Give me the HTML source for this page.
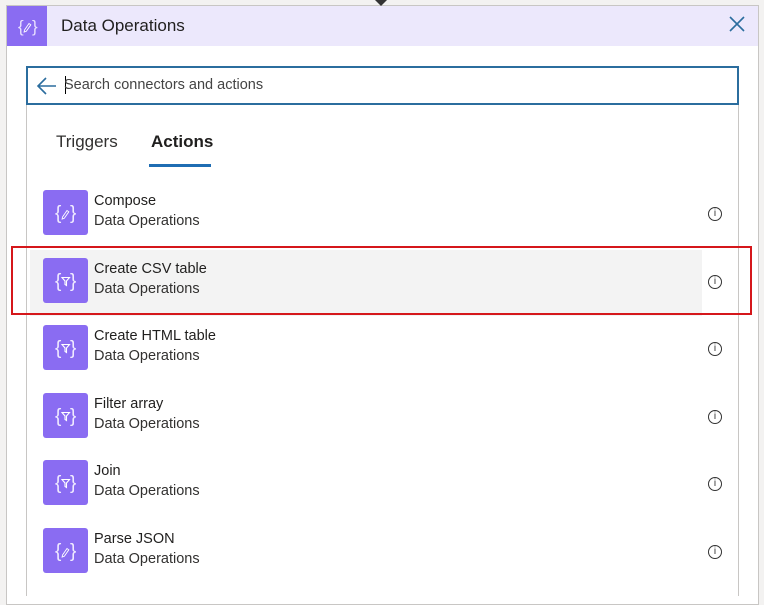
<!DOCTYPE html>
<html><head><style>
*{margin:0;padding:0;box-sizing:border-box}
body{width:764px;height:585px;overflow:hidden;background:#f3f2f1;font-family:"Liberation Sans",sans-serif;position:relative}
.card{position:absolute;left:6px;top:5px;width:753px;height:600px;background:#fff;border:1px solid #c8c6c4}
.hdr{position:absolute;left:7px;top:6px;width:751px;height:40px;background:#ece8fc}
.hico{position:absolute;left:7px;top:6px;width:40px;height:40px;background:#8a6cf2}
.ttl{position:absolute;left:61px;top:16px;font-size:17px;color:#201f1e}
.x{position:absolute;left:728px;top:15px}
.vl{position:absolute;top:66px;width:1px;height:530px;background:#c8c6c4}
.search{position:absolute;left:26px;top:66px;width:713px;height:39px;border:2px solid #2b6d9e;background:#fff}
.stext{position:absolute;left:64px;top:77px;font-size:14.5px;color:#444}
.tab{position:absolute;top:132px;font-size:17px;color:#323130}
.ul{position:absolute;left:149px;top:164px;width:62px;height:3px;background:#1f6db3}
.ico{position:absolute;left:43px;width:45px;height:45px;background:#8a6cf2;border-radius:3px}
.ico svg,.hico svg{position:absolute;left:0;top:0}
.t1{position:absolute;left:94px;font-size:14.5px;color:#201f1e}
.t2{position:absolute;left:94px;font-size:14.5px;color:#323130}
.inf{position:absolute;left:708px;width:14px;height:14px;border:1px solid #333;border-radius:50%;font-size:10px;text-align:center;line-height:12px;color:#333}
.hl{position:absolute;left:30px;top:250px;width:672px;height:66px;background:#f3f3f3}
.red{position:absolute;left:11px;top:246px;width:741px;height:69px;border:2px solid #d5171b}
svg text{font-family:"Liberation Sans",sans-serif}
</style></head><body>
<div class="card"></div>
<div class="hdr"></div>
<div class="hico"><svg width="40" height="40"><text x="11" y="26" fill="#e8e0ff" font-size="17">{</text><text x="25" y="26" fill="#e8e0ff" font-size="17">}</text><path d="M17.5 24l4.5-6.5 1.8 1.3-4.5 6.5-2.2 0.8z" fill="none" stroke="#fff" stroke-width="0.9"/></svg></div>
<div class="ttl">Data Operations</div>
<svg class="x" width="18" height="18"><path d="M2 2L16 16M16 2L2 16" stroke="#2b6d9e" stroke-width="1.6"/></svg>
<svg style="position:absolute;left:375px;top:0" width="12" height="6"><path d="M0 0h12L6 6z" fill="#333"/></svg>
<div class="vl" style="left:26px"></div>
<div class="vl" style="left:738px"></div>
<div class="search"></div>
<svg style="position:absolute;left:36px;top:76px" width="22" height="20"><path d="M20 10H3M10 2L2 10l8 8" fill="none" stroke="#2b6d9e" stroke-width="1.6"/></svg>
<div style="position:absolute;left:65px;top:76px;width:1px;height:18px;background:#000"></div>
<div class="stext">Search connectors and actions</div>
<div class="tab" style="left:56px">Triggers</div>
<div class="tab" style="left:151px;font-weight:bold;color:#201f1e">Actions</div>
<div class="ul"></div>
<div class="hl"></div>

<div class="ico" style="top:190px"><svg width="45" height="45"><text x="12" y="29" fill="#f0ebff" font-size="19">{</text><text x="27" y="29" fill="#f0ebff" font-size="19">}</text><path d="M19.5 27l4.5-6.5 1.8 1.3-4.5 6.5-2.2 0.8z" fill="none" stroke="#fff" stroke-width="0.9"/></svg></div>
<div class="t1" style="top:193px">Compose</div><div class="t2" style="top:213px">Data Operations</div><div class="inf" style="top:207px">i</div>

<div class="ico" style="top:258px"><svg width="45" height="45"><text x="12" y="29" fill="#f0ebff" font-size="19">{</text><text x="27" y="29" fill="#f0ebff" font-size="19">}</text><path d="M19 19.5h7.5l-3 3.5v4.5l-1.5-1v-3.5z" fill="none" stroke="#fff" stroke-width="1.1"/></svg></div>
<div class="t1" style="top:261px">Create CSV table</div><div class="t2" style="top:281px">Data Operations</div><div class="inf" style="top:275px">i</div>

<div class="ico" style="top:325px"><svg width="45" height="45"><text x="12" y="29" fill="#f0ebff" font-size="19">{</text><text x="27" y="29" fill="#f0ebff" font-size="19">}</text><path d="M19 19.5h7.5l-3 3.5v4.5l-1.5-1v-3.5z" fill="none" stroke="#fff" stroke-width="1.1"/></svg></div>
<div class="t1" style="top:328px">Create HTML table</div><div class="t2" style="top:348px">Data Operations</div><div class="inf" style="top:342px">i</div>

<div class="ico" style="top:393px"><svg width="45" height="45"><text x="12" y="29" fill="#f0ebff" font-size="19">{</text><text x="27" y="29" fill="#f0ebff" font-size="19">}</text><path d="M19 19.5h7.5l-3 3.5v4.5l-1.5-1v-3.5z" fill="none" stroke="#fff" stroke-width="1.1"/></svg></div>
<div class="t1" style="top:396px">Filter array</div><div class="t2" style="top:416px">Data Operations</div><div class="inf" style="top:410px">i</div>

<div class="ico" style="top:460px"><svg width="45" height="45"><text x="12" y="29" fill="#f0ebff" font-size="19">{</text><text x="27" y="29" fill="#f0ebff" font-size="19">}</text><path d="M19 19.5h7.5l-3 3.5v4.5l-1.5-1v-3.5z" fill="none" stroke="#fff" stroke-width="1.1"/></svg></div>
<div class="t1" style="top:463px">Join</div><div class="t2" style="top:483px">Data Operations</div><div class="inf" style="top:477px">i</div>

<div class="ico" style="top:528px"><svg width="45" height="45"><text x="12" y="29" fill="#f0ebff" font-size="19">{</text><text x="27" y="29" fill="#f0ebff" font-size="19">}</text><path d="M19.5 27l4.5-6.5 1.8 1.3-4.5 6.5-2.2 0.8z" fill="none" stroke="#fff" stroke-width="0.9"/></svg></div>
<div class="t1" style="top:531px">Parse JSON</div><div class="t2" style="top:551px">Data Operations</div><div class="inf" style="top:545px">i</div>

<div class="red"></div>
</body></html>
